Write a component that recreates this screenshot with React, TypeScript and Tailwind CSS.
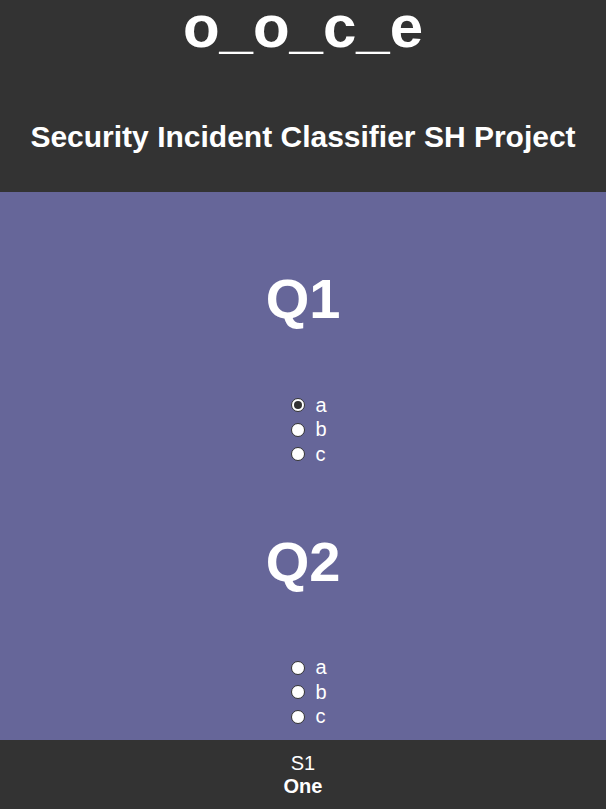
import React, { useState } from 'react';

const questions = [
  { id: 'q1', title: 'Q1', options: ['a', 'b', 'c'] },
  { id: 'q2', title: 'Q2', options: ['a', 'b', 'c'] },
];

function Radio({ checked }: { checked: boolean }) {
  return (
    <span className="flex h-[14px] w-[14px] items-center justify-center rounded-full border border-[#333] bg-white">
      {checked && <span className="h-[8px] w-[8px] rounded-full bg-[#333]" />}
    </span>
  );
}

export default function App() {
  const [answers, setAnswers] = useState<Record<string, string>>({ q1: 'a' });

  return (
    <div className="flex min-h-[809px] flex-col font-['Liberation_Sans',Arial,sans-serif] text-white">
      <header className="flex h-[192px] flex-col items-center bg-[#333333]">
        <h1 className="text-[60px] font-bold leading-[54px]">o_o_c_e</h1>
        <h2 className="mt-[68px] text-[30px] font-bold leading-none">Security Incident Classifier SH Project</h2>
      </header>

      <main className="flex flex-1 flex-col items-center bg-[#666699] pb-[11px] pt-[79px]">
        {questions.map((q, i) => (
          <section key={q.id} className={`flex flex-col items-center ${i > 0 ? 'mt-[67px]' : ''}`}>
            <h3 className="text-[56px] font-bold leading-none">{q.title}</h3>
            <div className="mt-[66px] flex flex-col items-start pl-[12px]">
              {q.options.map((opt) => (
                <label
                  key={opt}
                  className="flex h-[24.5px] cursor-pointer items-center gap-[10px] text-[20px] leading-none"
                  onClick={() => setAnswers({ ...answers, [q.id]: opt })}
                >
                  <Radio checked={answers[q.id] === opt} />
                  <span className="-mt-[1px]">{opt}</span>
                </label>
              ))}
            </div>
          </section>
        ))}
      </main>

      <footer className="flex h-[69px] flex-col items-center justify-center bg-[#333333] text-[20px] leading-[23px]">
        <span>S1</span>
        <span className="font-bold">One</span>
      </footer>
    </div>
  );
}
